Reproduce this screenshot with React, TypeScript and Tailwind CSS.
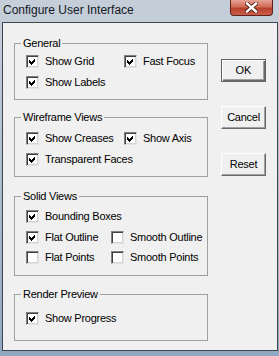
import React from "react";

const font = { fontFamily: '"Liberation Sans", Arial, sans-serif' };

function Check({ checked }: { checked: boolean }) {
  return (
    <div className="w-[13px] h-[13px] shrink-0 border border-t-[#808080] border-l-[#808080] border-b-[#e3e3e3] border-r-[#e3e3e3] bg-white shadow-[inset_1px_1px_0_#404040,inset_-1px_-1px_0_#d4d4d4] flex items-center justify-center">
      {checked && (
        <svg width="9" height="9" viewBox="0 0 9 9" shapeRendering="crispEdges">
          <polygon points="1,3 3,5 7,1 7,4 3,8 1,6" fill="#000" />
        </svg>
      )}
    </div>
  );
}

function Item({ label, checked, w }: { label: string; checked: boolean; w?: string }) {
  return (
    <div className={`flex items-center h-[13px] gap-[6px] ${w ?? ""}`}>
      <Check checked={checked} />
      <span className="text-[11px] tracking-[-0.25px] leading-[13px] text-black whitespace-nowrap">{label}</span>
    </div>
  );
}

function Group({ title, className, children }: { title: string; className: string; children: React.ReactNode }) {
  return (
    <div className={`relative w-[194px] border border-[#a0a0a0] pl-[11px] flex flex-col ${className}`}>
      <span className="absolute top-[-7px] left-[6px] px-[2px] leading-[13px] text-[11px] tracking-[-0.25px] bg-[#f0f0f0] text-black whitespace-nowrap">
        {title}
      </span>
      {children}
    </div>
  );
}

export default function App() {
  return (
    <div
      className="w-[279px] h-[356px] flex flex-col bg-[linear-gradient(180deg,#c6cfd9_0%,#b4c2d0_40%,#8fa8c2_100%)] overflow-hidden"
      style={font}
    >
      <div className="h-[22px] flex items-start justify-between shrink-0">
        <span className="pl-[3px] pt-[3px] text-[12px] leading-[15px] text-[#141824]">Configure User Interface</span>
        <div className="mr-[6px] w-[43px] h-[16px] rounded-b-[4px] border border-t-0 border-[#5e2219] bg-[linear-gradient(180deg,#e6a394_0%,#d06a57_45%,#b8402c_55%,#c9604b_100%)] flex items-center justify-center">
          <svg width="13" height="11" viewBox="0 0 13 11">
            <path d="M2 1.5 L11 9.5 M11 1.5 L2 9.5" stroke="#4a1a12" strokeWidth="4" strokeLinecap="square" />
            <path d="M2 1.5 L11 9.5 M11 1.5 L2 9.5" stroke="#ffffff" strokeWidth="2.4" strokeLinecap="square" />
          </svg>
        </div>
      </div>
      <div className="ml-[2px] mr-[1px] mb-[5px] flex-1 border border-[#3f4650] bg-[#f0f0f0] flex gap-[13px] pl-[11px]">
        <div className="flex flex-col">
          <Group title="General" className="mt-[20px] h-[57px] pt-[11px] gap-[8px]">
            <div className="flex">
              <Item label="Show Grid" checked w="w-[98px]" />
              <Item label="Fast Focus" checked />
            </div>
            <Item label="Show Labels" checked />
          </Group>
          <Group title="Wireframe Views" className="mt-[17px] h-[60px] pt-[14px] gap-[8px]">
            <div className="flex">
              <Item label="Show Creases" checked w="w-[98px]" />
              <Item label="Show Axis" checked />
            </div>
            <Item label="Transparent Faces" checked />
          </Group>
          <Group title="Solid Views" className="mt-[19px] h-[80px] pt-[13px]">
            <Item label="Bounding Boxes" checked />
            <div className="flex mt-[8px]">
              <Item label="Flat Outline" checked w="w-[85px]" />
              <Item label="Smooth Outline" checked={false} />
            </div>
            <div className="flex mt-[7px]">
              <Item label="Flat Points" checked={false} w="w-[85px]" />
              <Item label="Smooth Points" checked={false} />
            </div>
          </Group>
          <Group title="Render Preview" className="mt-[18px] h-[47px] pt-[17px]">
            <Item label="Show Progress" checked />
          </Group>
        </div>
        <div className="flex flex-col pt-[36px] gap-[24px]">
          <button className="w-[45px] h-[23px] border border-[#646464] bg-[#f0f0f0] shadow-[inset_1px_1px_0_#ffffff,inset_-1px_-1px_0_#696969,inset_-2px_-2px_0_#a0a0a0] text-[11px] text-black flex items-center justify-center">
            OK
          </button>
          <button className="w-[45px] h-[23px] border border-t-white border-l-white border-b-[#696969] border-r-[#696969] bg-[#f0f0f0] shadow-[inset_-1px_-1px_0_#a0a0a0] text-[11px] tracking-[-0.25px] text-black flex items-center justify-center">
            Cancel
          </button>
          <button className="w-[45px] h-[23px] border border-t-white border-l-white border-b-[#696969] border-r-[#696969] bg-[#f0f0f0] shadow-[inset_-1px_-1px_0_#a0a0a0] text-[11px] tracking-[-0.25px] text-black flex items-center justify-center">
            Reset
          </button>
        </div>
      </div>
    </div>
  );
}
